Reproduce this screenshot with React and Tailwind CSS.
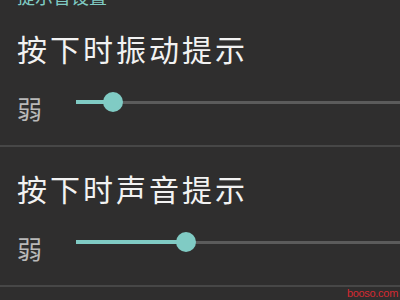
import React from "react";

const font = { fontFamily: '"Noto Sans CJK SC", "Noto Sans", sans-serif' };

function Slider({ pos }) {
  return (
    <div className="relative h-[24px] flex-1">
      <div className="absolute left-0 right-0 top-[11px] h-[3px] bg-[#5b5b5b]" />
      <div
        className="absolute left-0 top-[10px] h-[4px] bg-[#80cbc4]"
        style={{ width: pos }}
      />
      <div
        className="absolute top-[2px] h-[20px] w-[20px] -ml-[10px] rounded-full bg-[#80cbc4]"
        style={{ left: pos }}
      />
    </div>
  );
}

function Section({ title, pos }) {
  return (
    <div className="flex flex-col">
      <div className="px-[17px] text-[30px] leading-[34px] tracking-[3px] text-[#f2f2f2]">
        {title}
      </div>
      <div className="mt-[25px] flex items-start pl-[17px]">
        <div className="mt-[6px] w-[59px] text-[25px] leading-[25px] text-[#b9b9b9]">
          弱
        </div>
        <Slider pos={pos} />
      </div>
    </div>
  );
}

export default function App() {
  return (
    <div
      className="h-[300px] w-[400px] overflow-hidden bg-[#2f2e2e]"
      style={font}
    >
      <div className="-mt-[13px] px-[17px] text-[18px] leading-[18px] text-[#80cbc4]">
        提示音设置
      </div>
      <div className="mt-[26px]">
        <Section title="按下时振动提示" pos={37} />
      </div>
      <div className="mt-[24px] h-[2px] bg-[#474747]" />
      <div className="mt-[24px]">
        <Section title="按下时声音提示" pos={110} />
      </div>
      <div className="mt-[24px] h-[2px] bg-[#474747]" />
      <div className="flex justify-end pr-[2px]">
        <span
          className="text-[11px] leading-[13px] tracking-[-0.3px] text-[#d42a32]"
          style={{ fontFamily: '"Liberation Sans", sans-serif' }}
        >
          booso.com
        </span>
      </div>
    </div>
  );
}
